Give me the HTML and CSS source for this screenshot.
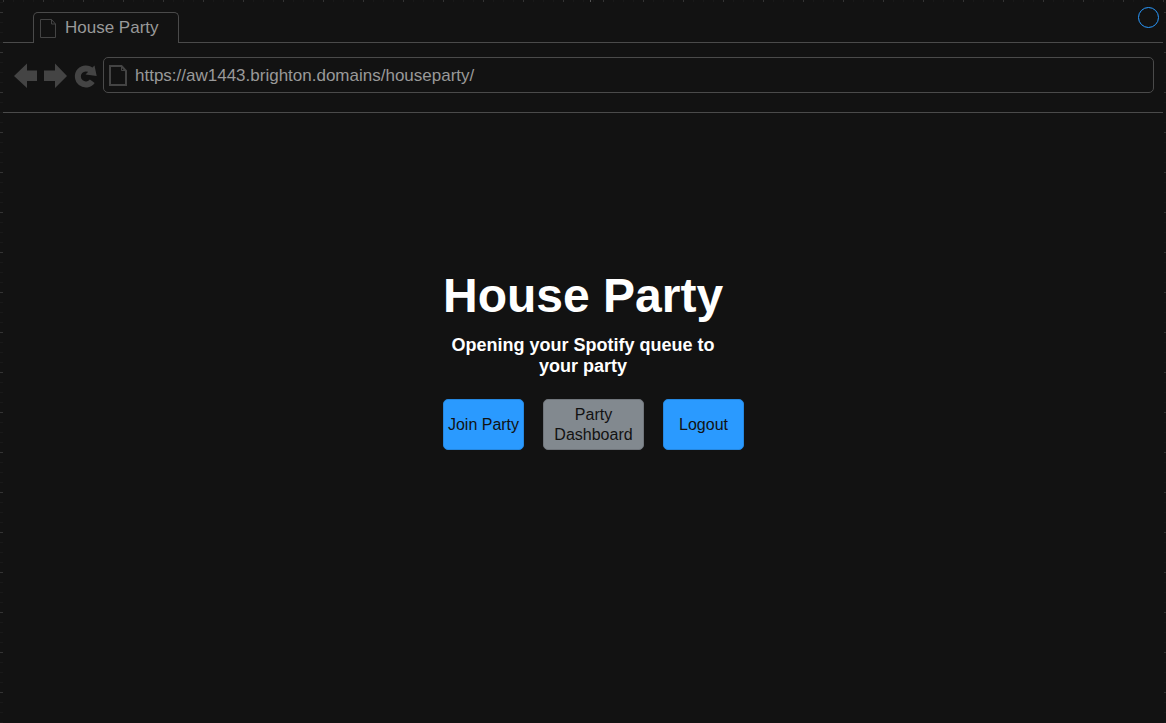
FILE: index.html
```
<!DOCTYPE html>
<html lang="en">
<head>
<meta charset="utf-8">
<title>House Party</title>
<link rel="stylesheet" href="styles.css">
</head>
<body>
<div class="canvas">
  <div class="browser">
    <div class="tabs">
      <div class="tab">
        <svg class="tab-icon" width="16" height="19" viewBox="0 0 16 19" fill="none" stroke="#444"><path d="M.5 .5H11.5L15.5 5V18.5H.5ZM11.5 .5V5H15.5"/></svg>
        <span>House Party</span>
      </div>
      <span class="status"></span>
    </div>
    <div class="toolbar">
      <button class="nav" type="button" aria-label="Back"><svg width="23" height="26" viewBox="0 0 23 26" fill="#444"><path d="M0 14L13 1.500V8.500H23V19H13V26Z"/></svg></button>
      <button class="nav" type="button" aria-label="Forward"><svg width="23" height="26" viewBox="0 0 23 26" fill="#444"><path d="M23 14L11 1.500V8.500H0V19H11V26Z"/></svg></button>
      <button class="nav" type="button" aria-label="Reload"><svg width="22" height="26" viewBox="0 0 22 26" overflow="visible"><path d="M17.500 8.800A8 8 0 1 0 18.300 19.200" fill="none" stroke="#444" stroke-width="6"/><path d="M20.500 3.500L22.700 14L11.500 12.500Z" fill="#444"/></svg></button>
      <label class="address">
        <svg width="18" height="21" viewBox="0 0 18 21" fill="none" stroke="#444" stroke-width="2"><path d="M1 1H12.500L17 6V20H1Z"/><path d="M12.500 1V5.500H17" stroke-width="1"/></svg>
        <input type="text" aria-label="Address" value="https://aw1443.brighton.domains/houseparty/">
      </label>
    </div>
    <main class="page">
      <h1>House Party</h1>
      <p class="tagline">Opening your Spotify queue to your party</p>
      <div class="actions">
        <button class="action" type="button">Join Party</button>
        <button class="action muted" type="button">Party Dashboard</button>
        <button class="action" type="button">Logout</button>
      </div>
    </main>
  </div>
</div>
</body>
</html>
```
FILE: styles.css
```
* {
  box-sizing: border-box;
}

body {
  margin: 0;
  background: #121212;
  color: #fff;
  font-family: "Liberation Sans", Arial, sans-serif;
}

/* ruler ticks along the top and both sides */
.canvas {
  min-height: 100vh;
  padding: 0 3px;
  background:
    linear-gradient(#555, #555) 590px 0 / 1px 2px no-repeat,
    repeating-linear-gradient(90deg, #333 0 1px, transparent 1px 40px) 3px 0 / 100% 2px no-repeat,
    repeating-linear-gradient(#333 0 1px, transparent 1px 40px) 0 12px / 3px 100% no-repeat,
    repeating-linear-gradient(#333 0 1px, transparent 1px 40px) 100% 12px / 2px 100% no-repeat,
    repeating-linear-gradient(90deg, #191919 0 1px, transparent 1px 10px) 3px 0 / 100% 2px no-repeat,
    repeating-linear-gradient(#191919 0 1px, transparent 1px 10px) 0 2px / 3px 100% no-repeat,
    repeating-linear-gradient(#191919 0 1px, transparent 1px 10px) 100% 2px / 2px 100% no-repeat;
}

.tabs {
  position: relative;
  display: flex;
  padding-top: 12px;
}

.tabs::before,
.tabs::after {
  content: "";
  border-bottom: 1px solid #4a4a4a;
}

.tabs::before {
  width: 30px;
}

.tabs::after {
  flex: 1;
}

.tab {
  display: flex;
  align-items: center;
  gap: 9px;
  height: 31px;
  padding: 0 19px 0 6px;
  border: 1px solid #4a4a4a;
  border-bottom: 0;
  border-radius: 5px 5px 0 0;
  color: #999;
  font-size: 17px;
}

.status {
  position: absolute;
  top: 7px;
  right: 4px;
  width: 21px;
  height: 21px;
  border: 1px solid #2a9aff;
  border-radius: 50%;
}

.toolbar {
  display: flex;
  align-items: center;
  gap: 7px;
  padding: 14px 9px 19px 11px;
  border-bottom: 1px solid #4a4a4a;
}

.nav {
  display: flex;
  padding: 0;
  border: 0;
  background: none;
}

.address {
  display: flex;
  flex: 1;
  align-items: center;
  gap: 8px;
  height: 36px;
  padding: 0 5px;
  border: 1px solid #4a4a4a;
  border-radius: 5px;
}

.address input {
  flex: 1;
  padding: 2px 0 0;
  border: 0;
  outline: 0;
  background: none;
  color: #999;
  font: 17px "Liberation Sans", Arial, sans-serif;
}

.page {
  width: 280px;
  margin: 0 auto;
  padding: 155px 0 40px;
}

h1 {
  margin: 0;
  font-size: 48px;
  line-height: 56px;
  white-space: nowrap;
}

.tagline {
  margin: 11px 0 0;
  font-size: 18px;
  font-weight: bold;
  line-height: 21px;
  text-align: center;
}

/* the button row runs a little wider than the heading */
.actions {
  display: flex;
  gap: 19px;
  width: max-content;
  margin-top: 22px;
}

.action {
  width: 81px;
  height: 51px;
  padding: 0;
  border: 1px solid #2587df;
  border-radius: 5px;
  background: #2a9aff;
  color: #121212;
  font: 16px/20px "Liberation Sans", Arial, sans-serif;
}

.muted {
  width: 101px;
  border-color: #70757b;
  background: #82898f;
}
```
